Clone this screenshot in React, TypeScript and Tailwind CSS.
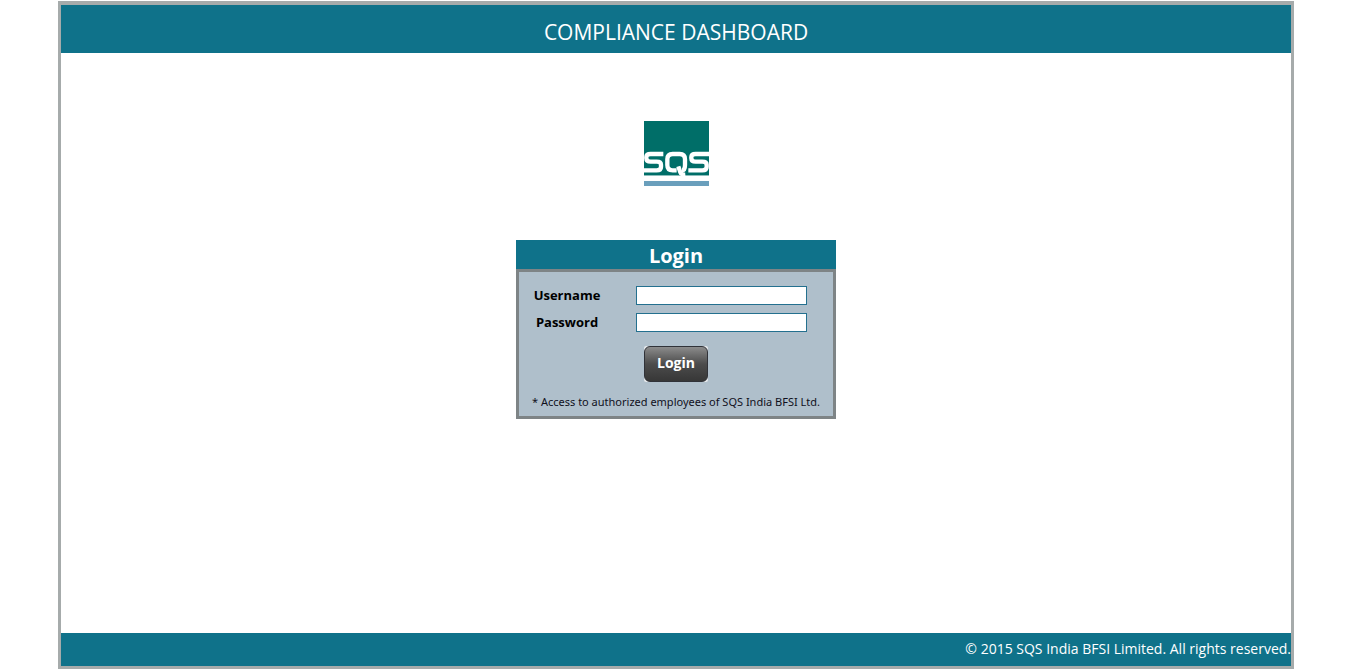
import type { ReactNode } from "react";

function Logo() {
  return (
    <svg role="img" aria-label="SQS" viewBox="0 0 195 195" className="size-[65px]">
      <rect width="195" height="164" fill="#006e68" />
      <g fill="none" stroke="#fff" strokeWidth="13">
        <path d="M58 99H20Q7 99 7 108V112Q7 122 20 122H38Q51 122 51 131V138Q51 148 38 148H0" />
        <path d="M98 148H86Q70 148 70 132V115Q70 99 86 99H107Q123 99 123 115V132Q123 148 114 148" />
        <path d="M103 136L109 154Q112 162 124 161" />
        <path d="M195 99H155Q142 99 142 108V112Q142 122 155 122H175Q188 122 188 131V138Q188 148 175 148H133" />
      </g>
      <rect y="164" width="195" height="16" fill="#fff" />
      <rect y="180" width="195" height="15" fill="#6a9fbc" />
    </svg>
  );
}

function Field({ id, label, type }: { id: string; label: ReactNode; type: string }) {
  return (
    <div className="flex items-center">
      <label htmlFor={id} className="w-24 text-center text-[13px] leading-[19px] font-bold text-black">
        {label}
      </label>
      <input
        id={id}
        type={type}
        className="ml-[21px] h-[19px] w-[171px] border border-[#24708f] bg-white px-1 text-xs text-black outline-none"
      />
    </div>
  );
}

export default function App() {
  return (
    <div className="flex min-h-screen bg-white pt-px pr-[65px] pl-[58px] font-['Open_Sans','Noto_Sans',sans-serif]">
      <div className="flex grow flex-col border-[3px] border-t-4 border-[#a6abab]">
        <header className="flex h-12 items-center justify-center bg-[#0f728a] pt-1.5">
          <h1 className="text-[21px] leading-7 text-white">COMPLIANCE DASHBOARD</h1>
        </header>

        <main className="flex grow flex-col items-center pt-[68px]">
          <Logo />
          <section className="mt-[54px] w-80">
            <h2 className="bg-[#0f728a] pt-0.5 text-center text-xl leading-[27px] font-bold text-white">Login</h2>
            <form
              onSubmit={(event) => event.preventDefault()}
              className="flex flex-col gap-2 border-[3px] border-[#7e8486] bg-[#afbfcb] pt-[14px] pb-0.5"
            >
              <Field id="username" label="Username" type="text" />
              <Field id="password" label="Password" type="password" />
              <div className="mt-1.5 flex self-center rounded-xs bg-[#e4e8eb]">
                <button
                  type="submit"
                  className="h-9 w-16 rounded-md border border-[#303238] bg-linear-to-b from-[#8c8c8c] from-0% via-[#4c4c4c] via-50% to-[#373737] pb-0.5 text-sm font-bold text-white"
                >
                  Login
                </button>
              </div>
              <p className="text-center font-['Noto_Sans',sans-serif] text-[11px] leading-6 whitespace-nowrap text-[#10101c]">
                * Access to authorized employees of SQS India BFSI Ltd.
              </p>
            </form>
          </section>
        </main>

        <footer className="h-[33px] bg-[#0f728a] text-right text-sm leading-8 text-white">
          © 2015 SQS India BFSI Limited. All rights reserved.
        </footer>
      </div>
    </div>
  );
}
